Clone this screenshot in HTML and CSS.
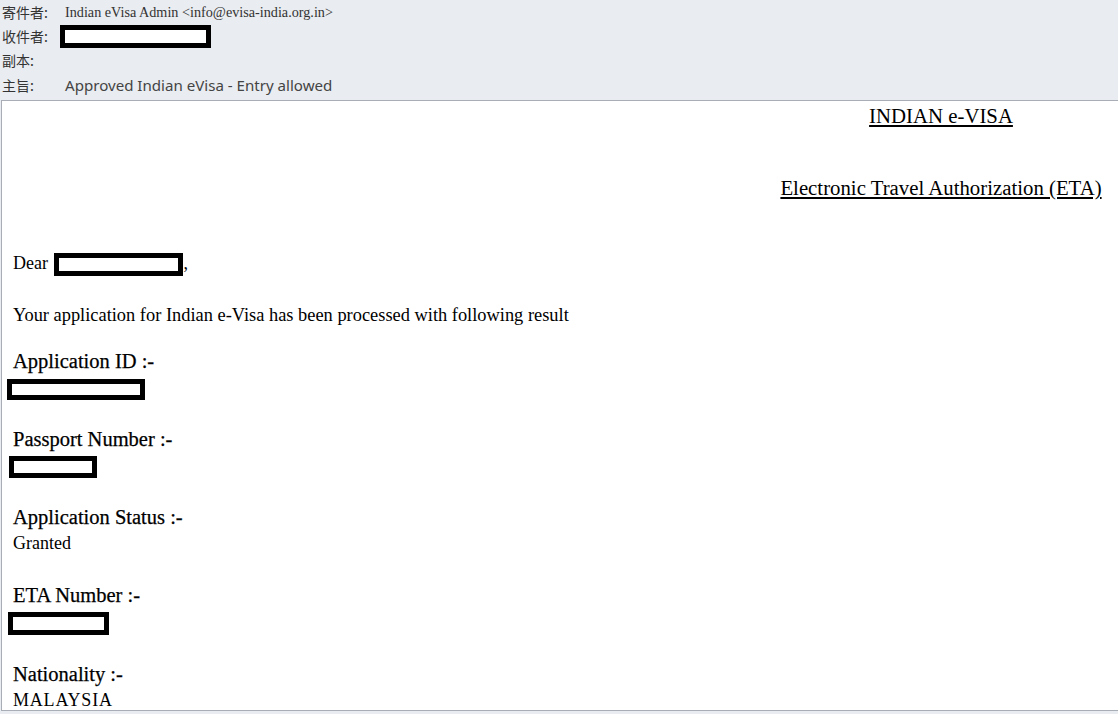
FILE: index.html
```html
<!DOCTYPE html>
<html lang="zh-Hant">
<head>
  <meta charset="UTF-8" />
  <title>Approved Indian eVisa - Entry allowed</title>
  <link rel="stylesheet" href="styles.css">
</head>
<body>
  <div class="mail-header">
    <div class="hdr-row">
      <span class="hdr-label">寄件者:</span>
      <span class="hdr-from">Indian eVisa Admin &lt;info@evisa-india.org.in&gt;</span>
    </div>
    <div class="hdr-row">
      <span class="hdr-label">收件者:</span>
      <span class="redact redact-to"></span>
    </div>
    <div class="hdr-row">
      <span class="hdr-label">副本:</span>
    </div>
    <div class="hdr-row">
      <span class="hdr-label">主旨:</span>
      <span class="hdr-subject">Approved Indian eVisa - Entry allowed</span>
    </div>
  </div>

  <div class="mail-body">
    <div class="titles">
      <div class="title-line">INDIAN e-VISA</div>
      <div class="title-line title-eta">Electronic Travel Authorization (ETA)</div>
    </div>

    <p class="greeting">Dear <span class="redact redact-name"></span>,</p>
    <p class="intro">Your application for Indian e-Visa has been processed with following result</p>

    <div class="field">
      <div class="field-label">Application ID :-</div>
      <div class="field-value"><span class="redact redact-appid"></span></div>
    </div>
    <div class="field">
      <div class="field-label">Passport Number :-</div>
      <div class="field-value"><span class="redact redact-passport"></span></div>
    </div>
    <div class="field">
      <div class="field-label">Application Status :-</div>
      <div class="field-value">Granted</div>
    </div>
    <div class="field">
      <div class="field-label">ETA Number :-</div>
      <div class="field-value"><span class="redact redact-eta"></span></div>
    </div>
    <div class="field">
      <div class="field-label">Nationality :-</div>
      <div class="field-value caps">MALAYSIA</div>
    </div>
  </div>
</body>
</html>
```

FILE: styles.css
```css
body {
  margin: 0;
  height: 714px;
  overflow: hidden;
  background-color: #e9ecf0;
  font-family: 'Liberation Serif', serif;
  color: #000;
}

/* message header block */
.mail-header {
  height: 100px;
  padding-left: 2px;
  box-sizing: border-box;
}

.hdr-row {
  display: flex;
  align-items: center;
  height: 24px;
}

.hdr-row:last-child {
  padding-top: 1px;
}

.hdr-label {
  width: 63px;
  font-family: 'Noto Sans CJK TC', 'Noto Sans', sans-serif;
  font-size: 14px;
  color: #333;
}

.hdr-from {
  font-family: 'Liberation Serif', serif;
  font-size: 14.2px;
  color: #333;
}

.hdr-subject {
  font-family: 'Noto Sans', sans-serif;
  font-size: 15.1px;
  color: #444;
}

/* black boxes over personal data */
.redact {
  display: inline-block;
  box-sizing: border-box;
  border: 5px solid #000;
  background: #fff;
  vertical-align: middle;
}

.redact-to { width: 151px; height: 23px; margin-left: -5px; }
.redact-name { width: 129px; height: 23px; margin-left: 2px; }
.redact-appid { width: 138px; height: 21px; margin-left: -6px; }
.redact-passport { width: 88px; height: 22px; margin-left: -4px; }
.redact-eta { width: 101px; height: 23px; margin-left: -5px; }

/* message content */
.mail-body {
  margin-left: 1px;
  height: 611px;
  box-sizing: border-box;
  background: #fff;
  border-top: 1px solid #a9aeb6;
  border-left: 1px solid #a9aeb6;
  border-bottom: 1px solid #a9aeb6;
  padding-left: 11px;
  overflow: hidden;
}

.titles {
  display: flex;
  flex-direction: column;
  align-items: center;
  width: 322px;
  margin-left: auto;
  margin-right: 16px;
  padding-top: 3px;
}

.title-line {
  font-size: 20.8px;
  line-height: 24px;
  text-decoration: underline;
}

.title-eta {
  margin-top: 48px;
}

.greeting {
  margin: 50px 0 0;
  font-size: 18px;
  line-height: 26px;
}

.intro {
  margin: 26px 0 0;
  font-size: 18.4px;
  line-height: 26px;
}

.field {
  margin-top: 20px;
}

.field + .field {
  margin-top: 26px;
}

.field-label {
  font-size: 20.5px;
  line-height: 26px;
  -webkit-text-stroke: 0.25px #000;
}

.field-value {
  font-size: 18px;
  line-height: 26px;
  min-height: 26px;
}

.caps {
  letter-spacing: 0.8px;
}
```
